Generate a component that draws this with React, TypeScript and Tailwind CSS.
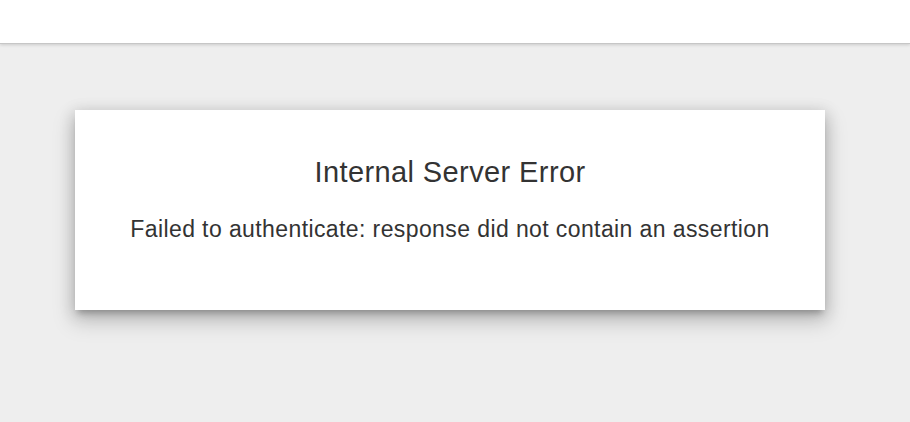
export default function App() {
  return (
    <div className="min-h-[422px] bg-[#eeeeee] font-['Liberation_Sans',Arial,sans-serif] text-[#333333]">
      {/* top bar */}
      <header className="h-[44px] bg-white border-b border-[#c6c6c6] shadow-[0_1px_3px_rgba(0,0,0,0.15)]" />

      <main className="pt-[66px]">
        <div className="ml-[75px] w-[750px] h-[200px] bg-white flex flex-col items-center shadow-[0_10px_20px_2px_rgba(0,0,0,0.18),0_3px_14px_2px_rgba(0,0,0,0.12),0_6px_6px_-3px_rgba(0,0,0,0.22)]">
          <h1 className="mt-[46px] text-[29px] leading-[32px] tracking-[0.4px]">Internal Server Error</h1>
          <p className="mt-[29px] text-[23px] leading-[24px] tracking-[0.4px] whitespace-nowrap">
            Failed to authenticate: response did not contain an assertion
          </p>
        </div>
      </main>
    </div>
  );
}
